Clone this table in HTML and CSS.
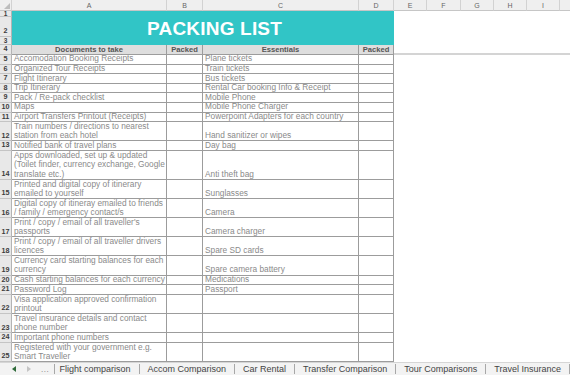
FILE: index.html
```
<!DOCTYPE html>
<html>
<head>
<meta charset="utf-8">
<link rel="stylesheet" href="styles.css">
</head>
<body>
<div class="sheet">
  <div class="ch corner"><svg width="6" height="6" viewBox="0 0 6 6"><polygon points="6,0 6,6 0,6" fill="#bdbdbd"/></svg></div>
  <div class="ch">A</div><div class="ch">B</div><div class="ch">C</div><div class="ch">D</div>
  <div class="ch">E</div><div class="ch">F</div><div class="ch">G</div><div class="ch">H</div><div class="ch">I</div><div class="ch last"></div>

  <div class="rh small">1</div>
  <div class="title">PACKING LIST</div>
  <div class="fill top"></div>
  <div class="rh">2</div>
  <div class="rh small">3</div>

  <div class="rh">4</div>
  <div class="hd">Documents to take</div><div class="hd">Packed</div><div class="hd">Essentials</div><div class="hd">Packed</div>
  <div class="fill frz"></div>

  <div class="rh">5</div><div class="c">Accomodation Booking Receipts</div><div class="c"></div><div class="c">Plane tickets</div><div class="c"></div><div class="fill"></div>
  <div class="rh">6</div><div class="c">Organized Tour Receipts</div><div class="c"></div><div class="c">Train tickets</div><div class="c"></div><div class="fill"></div>
  <div class="rh">7</div><div class="c">Flight Itinerary</div><div class="c"></div><div class="c">Bus tickets</div><div class="c"></div><div class="fill"></div>
  <div class="rh">8</div><div class="c">Trip Itinerary</div><div class="c"></div><div class="c">Rental Car booking Info &amp; Receipt</div><div class="c"></div><div class="fill"></div>
  <div class="rh">9</div><div class="c">Pack / Re-pack checklist</div><div class="c"></div><div class="c">Mobile Phone</div><div class="c"></div><div class="fill"></div>
  <div class="rh">10</div><div class="c">Maps</div><div class="c"></div><div class="c">Mobile Phone Charger</div><div class="c"></div><div class="fill"></div>
  <div class="rh">11</div><div class="c">Airport Transfers Printout (Receipts)</div><div class="c"></div><div class="c">Powerpoint Adapters for each country</div><div class="c"></div><div class="fill"></div>
  <div class="rh">12</div><div class="c">Train numbers / directions to nearest<br>station from each hotel</div><div class="c"></div><div class="c">Hand sanitizer or wipes</div><div class="c"></div><div class="fill"></div>
  <div class="rh">13</div><div class="c">Notified bank of travel plans</div><div class="c"></div><div class="c">Day bag</div><div class="c"></div><div class="fill"></div>
  <div class="rh">14</div><div class="c">Apps downloaded, set up &amp; updated<br>(Toilet finder, currency exchange, Google<br>translate etc.)</div><div class="c"></div><div class="c">Anti theft bag</div><div class="c"></div><div class="fill"></div>
  <div class="rh">15</div><div class="c">Printed and digital copy of itinerary<br>emailed to yourself</div><div class="c"></div><div class="c">Sunglasses</div><div class="c"></div><div class="fill"></div>
  <div class="rh">16</div><div class="c">Digital copy of itineray emailed to friends<br>/ family / emergency contact/s</div><div class="c"></div><div class="c">Camera</div><div class="c"></div><div class="fill"></div>
  <div class="rh">17</div><div class="c">Print / copy / email of all traveller's<br>passports</div><div class="c"></div><div class="c">Camera charger</div><div class="c"></div><div class="fill"></div>
  <div class="rh">18</div><div class="c">Print / copy / email of all traveller drivers<br>licences</div><div class="c"></div><div class="c">Spare SD cards</div><div class="c"></div><div class="fill"></div>
  <div class="rh">19</div><div class="c">Currency card starting balances for each<br>currency</div><div class="c"></div><div class="c">Spare camera battery</div><div class="c"></div><div class="fill"></div>
  <div class="rh">20</div><div class="c">Cash starting balances for each currency</div><div class="c"></div><div class="c">Medications</div><div class="c"></div><div class="fill"></div>
  <div class="rh">21</div><div class="c">Password Log</div><div class="c"></div><div class="c">Passport</div><div class="c"></div><div class="fill"></div>
  <div class="rh">22</div><div class="c">Visa application approved confirmation<br>printout</div><div class="c"></div><div class="c"></div><div class="c"></div><div class="fill"></div>
  <div class="rh">23</div><div class="c">Travel insurance details and contact<br>phone number</div><div class="c"></div><div class="c"></div><div class="c"></div><div class="fill"></div>
  <div class="rh">24</div><div class="c">Important phone numbers</div><div class="c"></div><div class="c"></div><div class="c"></div><div class="fill"></div>
  <div class="rh">25</div><div class="c">Registered with your government e.g.<br>Smart Traveller</div><div class="c"></div><div class="c"></div><div class="c"></div><div class="fill"></div>
</div>
<div class="tabs">
  <div class="nav">
    <svg width="6" height="6" viewBox="0 0 6 6"><polygon points="5,0 5,6 1,3" fill="#2f6b3a"/></svg>
    <svg width="6" height="6" viewBox="0 0 6 6"><polygon points="1,0 1,6 5,3" fill="#c4c4c4"/></svg>
    <span class="dots">...</span>
  </div>
  <div class="tab">Flight comparison</div>
  <div class="tab">Accom Comparison</div>
  <div class="tab">Car Rental</div>
  <div class="tab">Transfer Comparison</div>
  <div class="tab">Tour Comparisons</div>
  <div class="tab">Travel Insurance</div>
</div>
</body>
</html>
```
FILE: styles.css
```
* { box-sizing: border-box; }
html, body { margin: 0; padding: 0; background: #fff; }
body { width: 570px; height: 375px; overflow: hidden; font-family: "Liberation Sans", Arial, sans-serif; }

.sheet {
  display: grid;
  grid-template-columns: 12px 155px 36px 156px 35px 33px 34px 33px 33px 33px 1fr;
  grid-template-rows: 11px 6px 20px 8px 10px repeat(7, 9.6px) 19.2px 9.6px 28.8px repeat(5, 19.2px) 9.6px 9.6px 19.2px 19.2px 9.6px 19.2px;
  height: 362.2px;
}

.ch {
  background: #efefef;
  border-right: 1px solid #d2d2d2;
  border-bottom: 1px solid #c6c6c6;
  color: #666;
  font-size: 7px;
  display: flex;
  align-items: center;
  justify-content: center;
}
.ch.corner { justify-content: flex-end; align-items: flex-end; padding: 0 1px 1px 0; }
.ch.last { border-right: none; }

.rh {
  grid-column: 1;
  background: #e8e8e8;
  border-right: 1px solid #b4b4b4;
  border-bottom: 1px solid #c4c4c4;
  color: #3c3c3c;
  font-size: 7.2px;
  font-weight: bold;
  line-height: 8.6px;
  display: flex;
  align-items: flex-end;
  justify-content: center;
}
.rh.small { font-size: 6.5px; line-height: 6px; align-items: center; }

.title {
  grid-column: 2 / span 4;
  grid-row: span 3;
  background: #31c5c6;
  color: #fff;
  font-weight: bold;
  font-size: 19px;
  letter-spacing: 0.2px;
  display: flex;
  align-items: center;
  padding-left: 135px;
  padding-top: 1px;
}

.fill { grid-column: 6 / span 6; background: #fff; }
.fill.top { grid-row: span 3; }
.fill.frz { border-bottom: 2px solid #d4d4d4; }

.hd {
  background: #dedede;
  border-right: 1px solid #9c9c9c;
  border-bottom: 1px solid #9c9c9c;
  color: #555;
  font-weight: bold;
  font-size: 7.6px;
  display: flex;
  align-items: center;
  justify-content: center;
}

.c {
  border-right: 1px solid #9c9c9c;
  border-bottom: 1px solid #9c9c9c;
  color: #8a8a8a;
  font-size: 8.3px;
  line-height: 9.2px;
  padding: 0 0 0 2px;
  white-space: nowrap;
  display: flex;
  align-items: flex-end;
}

.tabs {
  height: 12.8px;
  background: #f3f3f3;
  border-top: 1px solid #d6d6d6;
  display: flex;
  align-items: center;
  font-size: 9px;
  color: #444;
}
.nav {
  width: 57px;
  display: flex;
  align-items: center;
  gap: 9px;
  padding-left: 11px;
}
.dots { color: #777; font-size: 8px; letter-spacing: 0.5px; }
.tab {
  padding: 0 8px;
  border-left: 1px solid #a8a8a8;
  line-height: 10px;
  white-space: nowrap;
}
.tab:nth-child(2) { padding-left: 4px; }
.tab:last-child { border-right: 1px solid #a8a8a8; }
```
